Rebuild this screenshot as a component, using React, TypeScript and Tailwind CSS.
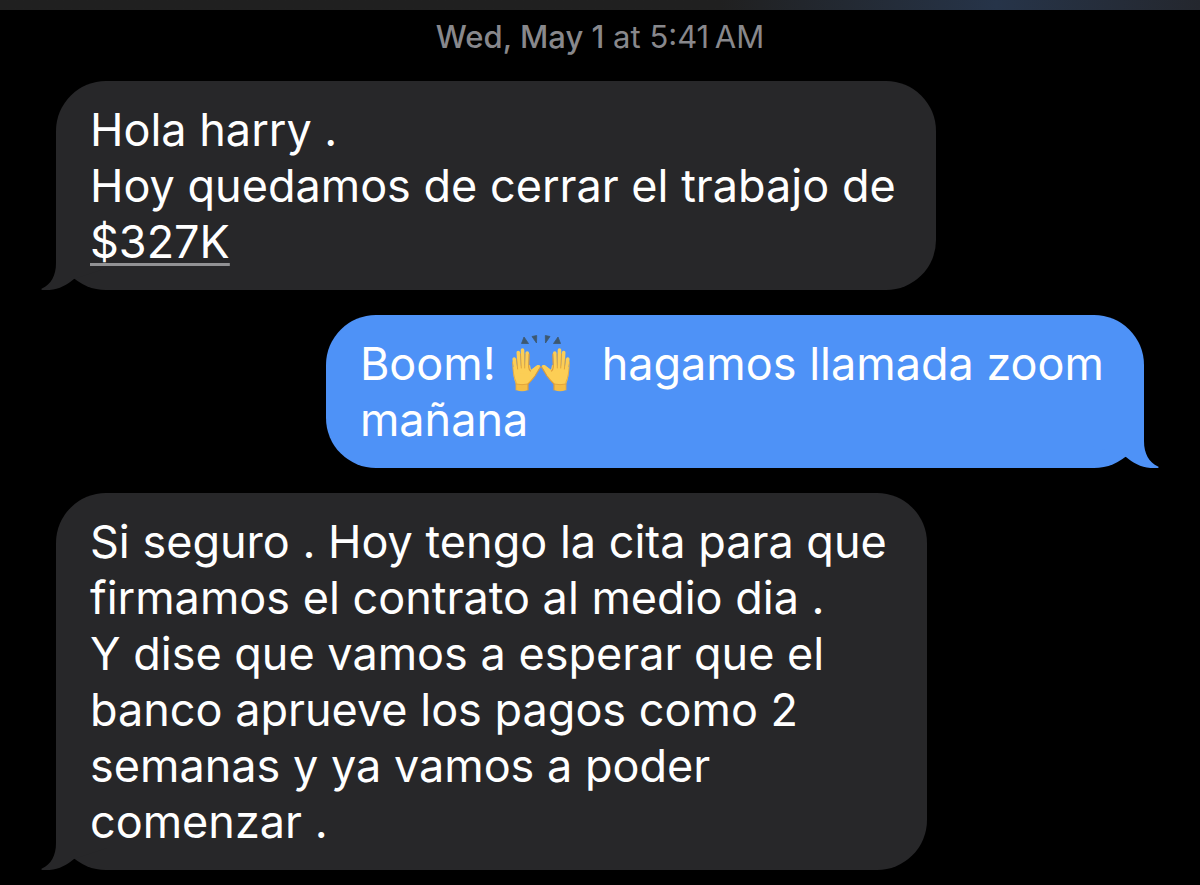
import clsx from "clsx";
import type { ReactNode } from "react";

type BubbleProps = {
    sent?: boolean;
    lines: ReactNode[];
}

const Tail = ({ sent }: { sent?: boolean }) => (
    <svg
        aria-hidden="true"
        viewBox="0 0 66 52"
        className={clsx(
            "absolute bottom-0 h-[52px] w-[66px] fill-current",
            sent ? "-right-[15px] -scale-x-100" : "-left-[15px]"
        )}
    >
        <path d="M15 0V25C15 38 10 46 1 50.5C0 51 0 52 2 52C15 53 25 48 33 41L66 30V0Z" />
    </svg>
)

const Bubble = ({ sent, lines }: BubbleProps) => (
    <li className={clsx("flex", sent ? "justify-end" : "justify-start")}>
        <div
            className={clsx(
                "relative rounded-[50px] pt-[21px] pr-10 pb-5 pl-[34px]",
                sent ? "bg-[#4e92f7] text-[#4e92f7]" : "bg-[#272729] text-[#272729]"
            )}
        >
            <Tail sent={sent} />
            <p className="relative text-[45px] leading-[56px] text-white">
                {lines.map((line, i) => (
                    <span key={i} className="block">{line}</span>
                ))}
            </p>
        </div>
    </li>
)

const Hand = () => (
    <g strokeLinecap="round" strokeLinejoin="round">
        <path d="M6 45H18V56Q12 58.500 6 56Z" fill="#f4bd45" />
        <path d="M3 33L20 31L21 36L25.500 32.500Q29 30 30.300 32L25 42Q21 48 18 50H6Q3 44 3 33Z" fill="#fcce55" />
        <path d="M4.200 25L6 38M8.300 18.500L9.500 38M12.500 16L13 38M17.200 19L16.500 38" stroke="#fcce55" strokeWidth="3.600" fill="none" />
        <path d="M6.700 25L7.600 35M10.500 20L11.300 34M14.900 20L14.700 34" stroke="#dda03a" strokeWidth="0.900" fill="none" />
        <path d="M20 39L28 33" stroke="#fcce55" strokeWidth="3.600" fill="none" />
        <path d="M19.200 20L18.700 33Q19 36 20.500 37M30.500 33L25 42Q21 47 18 50V56" stroke="#dd9c3a" strokeWidth="1.200" fill="none" />
        <path d="M2.500 28Q3 42 6 48V56" stroke="#e5a83e" strokeWidth="0.900" fill="none" />
        <path d="M6 50Q12 51.500 18 50" stroke="#dfa03a" strokeWidth="0.800" fill="none" />
    </g>
)

const RaisedHands = () => (
    <svg
        role="img"
        aria-label="Manos levantadas"
        viewBox="0 0 62 60"
        className="-mt-2 mr-1 -mb-3.5 ml-0.5 inline-block h-[60px] w-[62px] align-baseline"
    >
        <g fill="#3d5870" stroke="#3d5870" strokeLinejoin="round" strokeWidth="0.800">
            <path d="M11.500 9.500L14 3L18.500 9.500Z" />
            <path d="M22 2.500L26.700 1.500L26.500 9Z" />
            <path d="M40 2.500L35.300 1.500L35.500 9Z" />
            <path d="M50.500 9.500L48 3L43.500 9.500Z" />
        </g>
        <Hand />
        <g transform="matrix(-1 0 0 1 62 0)">
            <Hand />
        </g>
    </svg>
)

const App = () => {
    return (
        <div className="min-h-screen bg-black font-['Inter','Liberation_Sans',sans-serif]">
            <header className="h-[10px] bg-linear-to-r from-[#202020] from-60% via-[#263449] via-83% to-[#24272e]" />
            <main className="px-14 pb-[15px]">
                <p className="pt-2 text-center text-[31px] leading-[38px] text-[#88888c]">
                    <span className="font-medium">Wed, May 1</span> at 5:41&#8239;AM
                </p>
                <ul className="flex flex-col gap-[25px] pt-[25px]">
                    <Bubble
                        lines={[
                            "Hola harry .",
                            "Hoy quedamos de cerrar el trabajo de",
                            <a href="#monto" className="underline decoration-[#929294] decoration-3 underline-offset-[5px] [text-decoration-skip-ink:none]">$327K</a>,
                        ]}
                    />
                    <Bubble
                        sent
                        lines={[
                            <>Boom! <RaisedHands />&nbsp; hagamos llamada zoom</>,
                            "mañana",
                        ]}
                    />
                    <Bubble
                        lines={[
                            "Si seguro . Hoy tengo la cita para que",
                            "firmamos el contrato al medio dia .",
                            "Y dise que vamos a esperar que el",
                            "banco aprueve los pagos como 2",
                            "semanas y ya vamos a poder",
                            "comenzar .",
                        ]}
                    />
                </ul>
            </main>
        </div>
    )
}

export default App;
